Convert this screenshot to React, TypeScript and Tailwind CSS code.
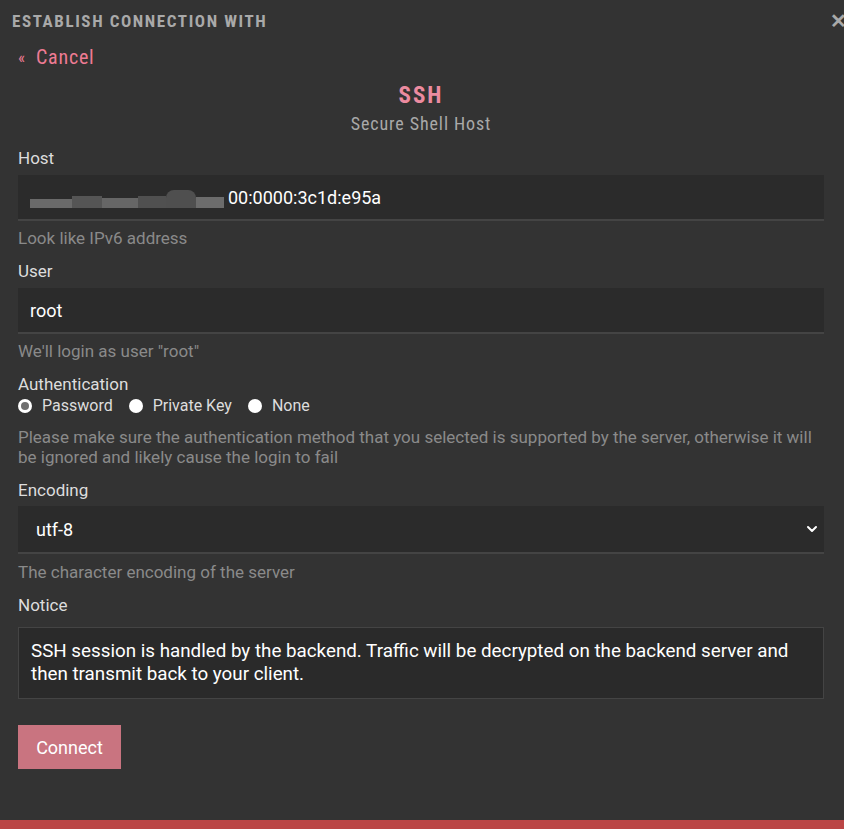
import { ChevronDown } from "lucide-react";

const condensed = {
  fontFamily: '"Roboto Condensed", "Liberation Sans Narrow", "DejaVu Sans Condensed", sans-serif',
};

function Field({ label, hint, children }: { label: string; hint?: string; children: React.ReactNode }) {
  return (
    <div className="flex flex-col">
      <label className="text-[17px] leading-[22px] text-[#dddddd]">{label}</label>
      <div className="mt-[6px]">{children}</div>
      {hint && <p className="mt-[6px] text-[17px] leading-[22px] text-[#8a8a8a]">{hint}</p>}
    </div>
  );
}

function Radio({ label, checked }: { label: string; checked?: boolean }) {
  return (
    <span className="flex items-center gap-[10px]">
      <span
        className={
          checked
            ? "flex h-[14px] w-[14px] items-center justify-center rounded-full bg-white"
            : "h-[14px] w-[14px] rounded-full bg-white"
        }
      >
        {checked && <span className="h-[8px] w-[8px] rounded-full bg-[#6f6f6f]" />}
      </span>
      <span>{label}</span>
    </span>
  );
}

export default function App() {
  return (
    <div className="relative h-[829px] w-[844px] overflow-hidden bg-[#333333]" style={{ fontFamily: "Roboto, sans-serif" }}>
      <div className="flex items-center justify-between pl-[12px] pt-[10px]">
        <h1 className="text-[17px] font-bold leading-[22px] tracking-[1.6px] text-[#a9a9a9]" style={condensed}>
          ESTABLISH CONNECTION WITH
        </h1>
        <span className="mr-[-3px] text-[20px] font-bold leading-[22px] text-[#a9a9a9]">✕</span>
      </div>

      <div className="pl-[18px] pr-[20px]">
        <a className="mt-[12px] flex items-center gap-[10px] text-[20px] leading-[26px] tracking-[0.8px] text-[#ee7b93]" style={condensed}>
          <span className="text-[17px]">«</span>
          <span>Cancel</span>
        </a>

        <div className="mt-[12px] flex flex-col items-center">
          <h2 className="text-[23px] font-bold leading-[28px] tracking-[2px] text-[#ec8ba0]" style={condensed}>
            SSH
          </h2>
          <p className="mt-[2px] text-[18px] leading-[24px] tracking-[0.9px] text-[#a9a9a9]" style={condensed}>
            Secure Shell Host
          </p>
        </div>

        <div className="mt-[11px] flex flex-col gap-[11px]">
          <Field label="Host" hint="Look like IPv6 address">
            <div className="flex h-[46px] items-center border-b-[2px] border-[#444444] bg-[#2b2b2b] px-[12px] text-[18px] text-white">
              <span className="relative mr-[4px] flex h-[22px] w-[194px] items-end blur-[0.6px]">
                <span className="h-[9px] w-[42px] bg-[#6a6a6a]" />
                <span className="h-[12px] w-[30px] bg-[#555555]" />
                <span className="h-[10px] w-[36px] bg-[#666666]" />
                <span className="h-[12px] w-[28px] bg-[#505050]" />
                <span className="h-[18px] w-[30px] rounded-t-[8px] bg-[#4f4f4f]" />
                <span className="h-[11px] w-[28px] bg-[#6c6c6c]" />
              </span>
              <span>00:0000:3c1d:e95a</span>
            </div>
          </Field>

          <Field label="User" hint={'We\'ll login as user "root"'}>
            <div className="flex h-[46px] items-center border-b-[2px] border-[#444444] bg-[#2b2b2b] px-[12px] text-[18px] text-white">
              root
            </div>
          </Field>

          <div className="flex flex-col">
            <label className="text-[17px] leading-[22px] text-[#dddddd]">Authentication</label>
            <div className="flex items-center gap-[16px] text-[16px] leading-[22px] text-[#dddddd]">
              <Radio label="Password" checked />
              <Radio label="Private Key" />
              <Radio label="None" />
            </div>
            <p className="mt-[10px] text-[17px] leading-[20px] text-[#8a8a8a]">
              Please make sure the authentication method that you selected is supported by the server, otherwise it will
              be ignored and likely cause the login to fail
            </p>
          </div>

          <div className="flex flex-col">
            <label className="mt-[1px] text-[17px] leading-[22px] text-[#dddddd]">Encoding</label>
            <div className="mt-[5px] flex h-[48px] items-center justify-between border-b-[2px] border-[#444444] bg-[#2b2b2b] pl-[18px] pr-[4px] text-[18px] text-white">
              <span>utf-8</span>
              <ChevronDown className="h-[16px] w-[16px]" strokeWidth={3} />
            </div>
            <p className="mt-[7px] text-[17px] leading-[22px] text-[#8a8a8a]">The character encoding of the server</p>
          </div>

          <div className="flex flex-col">
            <label className="text-[17px] leading-[22px] text-[#dddddd]">Notice</label>
            <div className="mt-[11px] border border-[#444444] bg-[#2a2a2a] px-[12px] py-[12px] text-[18.8px] leading-[23px] text-white">
              SSH session is handled by the backend. Traffic will be decrypted on the backend server and then transmit back to
              your client.
            </div>
          </div>
        </div>

        <button className="mt-[26px] h-[44px] w-[103px] bg-[#c97480] text-[18px] text-white">Connect</button>
      </div>

      <div className="absolute bottom-0 left-0 h-[9px] w-full bg-[#bb4545]" />
    </div>
  );
}
